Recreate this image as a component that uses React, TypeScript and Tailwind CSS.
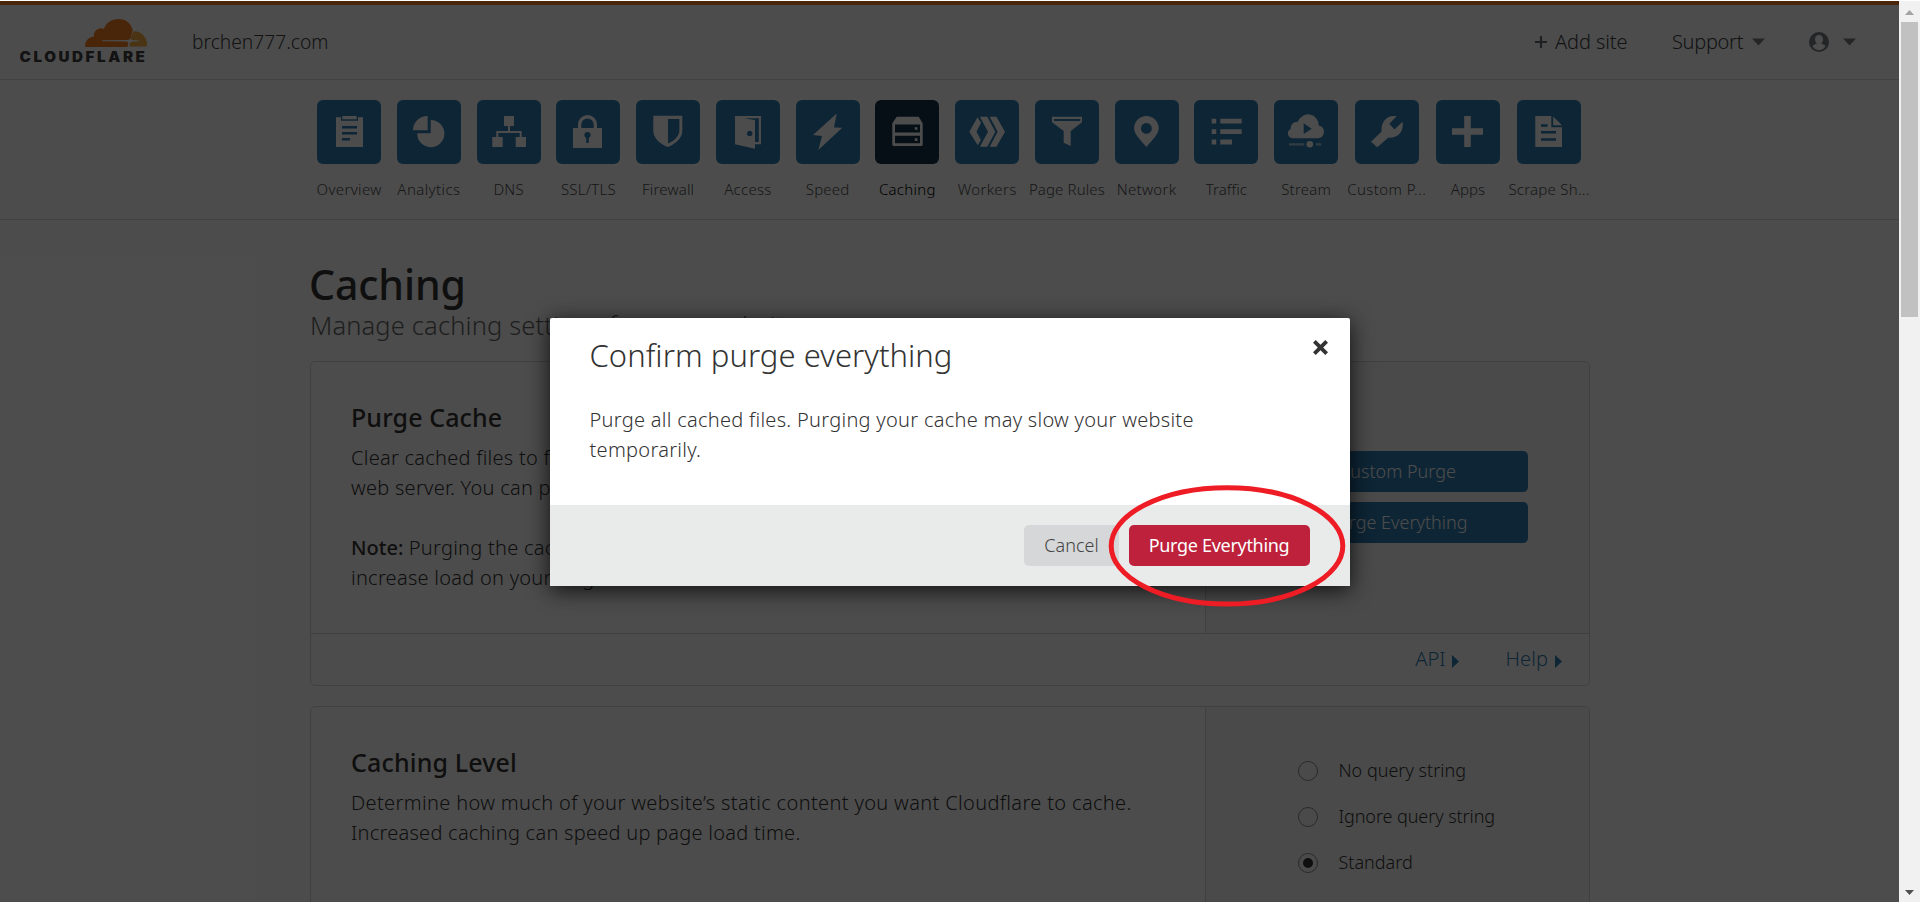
import React from "react";

const TILE = "fill-[#2d7cb1]";

type NavItem = { label: string; width: string; tracking: string; icon: React.ReactNode; active?: boolean };

const navItems: NavItem[] = [
  {
    label: "Overview", width: "w-[79.75px]", tracking: "tracking-[0.34px]",
    icon: (
      <>
        <path d="M19 17.3h5v3.4h17v-3.4h5V47H19z" />
        <path d="M25.3 16h14.4v3.3H25.3z" />
        <path className={TILE} d="M25 26h15v2.4H25zM25 32h15v2.5H25zM25 38h8v2.5h-8z" />
      </>
    ),
  },
  {
    label: "Analytics", width: "w-[79.75px]", tracking: "tracking-[0.4px]",
    icon: (
      <>
        <path d="M30.7 16v14.3H16A14.5 14.5 0 0 1 30.7 16z" />
        <path d="M33.7 20a13.6 13.6 0 1 1-13.5 13.3H33.7z" />
      </>
    ),
  },
  {
    label: "DNS", width: "w-[79.75px]", tracking: "tracking-[0.1px]",
    icon: <path d="M27 16h10v10h-4v5h11.7v6H49v10H38.7V37h4v-4H21.3v4h4.4v10H15.3V37h4v-6H31v-5h-4z" />,
  },
  {
    label: "SSL/TLS", width: "w-[79.75px]", tracking: "tracking-[0.25px]",
    icon: (
      <>
        <path d="M17 28h5v-3.5a9.5 9.5 0 0 1 19 0V28h5v20H17zM25.3 28h12.4v-3.3a6.2 6.2 0 0 0-12.4 0z" fillRule="evenodd" />
        <circle className={TILE} cx="31.5" cy="35" r="3.1" />
        <path className={TILE} d="M30.2 36h2.6v7h-2.6z" />
      </>
    ),
  },
  {
    label: "Firewall", width: "w-[79.75px]", tracking: "tracking-[0.2px]",
    icon: <path fillRule="evenodd" d="M17.3 15.8h29v14.7c0 7.5-6 13-14.5 16.6-8.5-3.600-14.500-9.100-14.500-16.600zM32 19v24.600c7-3.200 11.400-7.700 11.400-13.600V19z" />,
  },
  {
    label: "Access", width: "w-[79.75px]", tracking: "tracking-[0.25px]",
    icon: (
      <>
        <path d="M19 16h26v28.300h-6.500v-2.200h4.300V18.200H28L39 20v28.700l-20-4.400z" />
        <circle className={TILE} cx="33.700" cy="33.500" r="2.700" />
      </>
    ),
  },
  {
    label: "Speed", width: "w-[79.75px]", tracking: "tracking-[0.2px]",
    icon: <path d="M40.7 13.500 38 27.400l8.300.3L22.300 50 26 36.100 17 35z" />,
  },
  {
    label: "Caching", width: "w-[79.75px]", tracking: "tracking-[0.3px]", active: true,
    icon: (
      <>
        <path fillRule="evenodd" d="M21.700 16.700h22l4 6.500V44.500a1.500 1.500 0 0 1-1.500 1.500H18.800a1.500 1.500 0 0 1-1.500-1.500V23.200zM20 24.500v8h25v-8zM20 35.700v7.600h25v-7.600z" />
        <path d="M39.800 27.200h2.600v2.600h-2.600zM39.800 38.300h2.600v2.600h-2.600z" />
      </>
    ),
  },
  {
    label: "Workers", width: "w-[79.75px]", tracking: "tracking-[0.3px]",
    icon: (
      <path
        d="M22.500 17.200l-8.200 14.500 8.400 13.600 3.200-5.300-4.400-8.300 4.500-9zM24.900 16.700h7.400l8 15-8 15h-7.400L33 31.700zM34.700 16.700h6.700l8.600 15-8.600 15h-6.700l8-15z"
      />
    ),
  },
  {
    label: "Page Rules", width: "w-[79.75px]", tracking: "tracking-[0.12px]",
    icon: <path fillRule="evenodd" d="M17 16.700h30v5.500L35.700 31v15l-7-3.300V31L17 22.200zM19 19v2h26.300v-2z" />,
  },
  {
    label: "Network", width: "w-[79.75px]", tracking: "tracking-[0.3px]",
    icon: <path fillRule="evenodd" d="M31.400 16a12.300 12.300 0 0 1 12.300 12.300c0 6.700-7 12-12.300 18.700-5.300-6.700-12.300-12-12.300-18.700A12.300 12.300 0 0 1 31.400 16zm0 7a5.400 5.400 0 1 0 0 10.800 5.400 5.400 0 0 0 0-10.800z" />,
  },
  {
    label: "Traffic", width: "w-[79.75px]", tracking: "tracking-[0.1px]",
    icon: <path d="M17.700 18.800h4.500v4.800h-4.500zM26.300 18.800h21.400v4.800H26.300zM17.700 29.200h4.500V34h-4.500zM26.300 29.200h21.400V34H26.300zM17.700 39.600h4.500v4.800h-4.500zM26.300 39.600H38v4.800H26.300z" />,
  },
  {
    label: "Stream", width: "w-[79.75px]", tracking: "tracking-[0.2px]",
    icon: (
      <>
        <path d="M18.500 38.300a4.900 4.900 0 0 1-1.800-9.300c-.3-4.400 3-7.700 7.300-7.200a10.600 10.600 0 0 1 20.700 3.700 6.500 6.500 0 0 1-.3 12.800z" />
        <path className={TILE} d="M29.700 23.300v10.800l8-5.400z" />
        <path className="fill-white/60" d="M15 43.300h15.300v2.100H15zM42 43.300h5.300v2.100H42z" />
        <circle cx="35.800" cy="44.300" r="3.300" />
      </>
    ),
  },
  {
    label: "Custom P...", width: "w-[81.5px]", tracking: "tracking-[0.42px]",
    icon: <path d="M16 41.800 26.600 31.600c-1.300-8.600 5.200-17.200 15-15.300L34.400 23.700l5 5.800 8.200-7.700c1.600 8.600-4.300 17.300-14.200 15.800L22.300 47.300z" />,
  },
  {
    label: "Apps", width: "w-[81px]", tracking: "tracking-[0.1px]",
    icon: <path d="M28.200 16h6.600v12.300H47v6.500H34.800V47h-6.600V34.800H16v-6.500h12.200z" />,
  },
  {
    label: "Scrape Sh...", width: "w-[81px]", tracking: "tracking-[0.25px]",
    icon: (
      <>
        <path d="M18.300 16h16v11.200H45V47H18.300z" />
        <path d="M36.200 16.500 45 25.300h-8.800z" />
        <path className={TILE} d="M24 24.200h6.600v2.500H24zM24 31h15v2.600H24zM24 38.200h15v2.600H24z" />
      </>
    ),
  },
];

function Caret() {
  return (
    <svg width="13" height="8" viewBox="0 0 13 8" className="shrink-0 fill-[#777c80]">
      <path d="M0 .5h13L6.500 7.500z" />
    </svg>
  );
}

function Logo() {
  return (
    <svg width="127" height="45" viewBox="0 0 127 45" className="shrink-0">
      <path
        className="fill-[#f38020]"
        d="M65.300 28c-.8-4.600 2.300-10 8.600-10.500-.8-5.600 5-9.800 10-7.600C86 3.800 91.500 0 98.500 0c7.300 0 13 4.800 14.200 11.300l-2 7.400c-.5 1.500-1.700 2.200-3.300 2.300l-25.300.3v.9l24.500.3c1.500.1 2 .9 1.700 2.200l-.9 3.300z"
      />
      <path
        className="fill-[#faae40]"
        d="M113.400 12.200c7.800-.6 14.200 6.300 13.600 14.300-.1.500-.4.900-1 .9h-16.600c.2-3.700 1.200-4.400 4-4.800l6-.4v-.8l-6-.3c-2.300-.2-3-1.400-2.400-3.300z"
      />
      <text
        x="-0.500"
        y="43.300"
        textLength="128"
        lengthAdjust="spacingAndGlyphs"
        className="fill-[#404041] font-['Inter',sans-serif] text-[14px] font-black tracking-[2.4px]"
      >
        CLOUDFLARE
      </text>
    </svg>
  );
}

function Header() {
  return (
    <header className="flex h-[75px] shrink-0 items-center border-b border-[#dedede] pl-5 pr-[43px]">
      <div className="pb-px">
        <Logo />
      </div>
      <div className="ml-[45px] text-[19.2px] leading-[30px] text-[#404242]">brchen777.com</div>
      <div className="ml-auto flex items-center text-[20px] leading-[30px] text-[#404242]">
        <div className="flex items-center">
          <svg width="12" height="12" viewBox="0 0 12 12" className="mr-2 fill-[#6a6d6f]">
            <path d="M4.900 0h2.200v4.900H12v2.200H7.100V12H4.900V7.100H0V4.900h4.900z" />
          </svg>
          <span className="w-[72px] whitespace-nowrap tracking-[-0.1px]">Add site</span>
        </div>
        <div className="ml-[45px] flex items-center">
          <span className="mr-[9px] w-[71px] whitespace-nowrap tracking-[-0.3px]">Support</span>
          <Caret />
        </div>
        <div className="ml-[44px] flex items-center">
          <svg width="20" height="20" viewBox="0 0 20 20" className="mr-[14px] fill-[#777c80]">
            <path
              fillRule="evenodd"
              d="M10 0a10 10 0 1 1 0 20 10 10 0 0 1 0-20zM10 3c-2.600 0-4.100 1.900-4 4.500.1 1.800.9 3.300 2 4.200-2.200.4-3.700 1.200-4.600 2.400 1.300 2.600 3.600 4.100 6.600 4.100s5.300-1.500 6.600-4.100c-.9-1.200-2.400-2-4.600-2.400 1.100-.9 1.900-2.400 2-4.200.1-2.600-1.400-4.500-4-4.500z"
            />
          </svg>
          <Caret />
        </div>
      </div>
    </header>
  );
}

function Nav() {
  return (
    <nav className="h-[140px] shrink-0 border-b border-[#dedede] pt-5">
      <ul className="ml-[309.25px] flex">
        {navItems.map((n) => (
          <li key={n.label} className={`flex shrink-0 flex-col items-center ${n.width}`}>
            <div className={`h-16 w-16 rounded-[6px] ${n.active ? "bg-[#16344c]" : "bg-[#2d7cb1]"}`}>
              <svg width="64" height="64" viewBox="0 0 64 64" className="fill-white">
                {n.icon}
              </svg>
            </div>
            <span
              className={`mt-[15px] whitespace-nowrap text-[15px] leading-5 ${n.tracking} ${n.active ? "text-black" : "text-[#4d4f50]"}`}
            >
              {n.label}
            </span>
          </li>
        ))}
      </ul>
    </nav>
  );
}

function FooterLink({ label, className }: { label: string; className: string }) {
  return (
    <a className={`flex items-center pb-[2px] text-[20px] leading-[30px] text-[#2d7cb1] ${className}`}>
      {label}
      <svg width="7" height="13" viewBox="0 0 7 13" className="ml-[7px] mt-[5px] fill-[#2d7cb1]">
        <path d="M0 0l7 6.500L0 13z" />
      </svg>
    </a>
  );
}

function Radio({ label, checked, tracking }: { label: string; checked?: boolean; tracking: string }) {
  return (
    <label className="flex h-[46px] items-center">
      <span className="flex h-5 w-5 items-center justify-center rounded-full border border-[#8a8a8a]">
        {checked && <span className="h-[10px] w-[10px] rounded-full bg-[#333]" />}
      </span>
      <span className={`ml-[20.5px] whitespace-nowrap pb-[2px] text-[18px] leading-[26px] text-[#333] ${tracking}`}>{label}</span>
    </label>
  );
}

function Main() {
  return (
    <main className="ml-[310px] w-[1280px] pt-[44px] text-[#333]">
      <h1 className="-ml-px text-[41px] font-medium leading-10 tracking-[-0.1px]">Caching</h1>
      <p className="mt-[5px] text-[25.500px] leading-8 tracking-[0.15px] text-[#666]">
        Manage caching settings for your website.
      </p>

      <section className="mt-5 h-[325px] overflow-hidden rounded-[5px] border border-[#d5d5d5]">
        <div className="flex h-[272px] border-b border-[#d5d5d5]">
          <div className="w-[894px] pl-[40px] pt-[39px]">
            <h2 className="text-[25px] font-medium leading-8 tracking-[0.1px]">Purge Cache</h2>
            <div className="mt-[10px] whitespace-nowrap text-[20px] leading-[30px] tracking-[0.26px]">
              <p>
                Clear cached files to force Cloudflare to fetch a fresh version of those files from your
                <br />
                web server. You can purge files selectively or all at once.
              </p>
              <p className="mt-[30px]">
                <span className="font-medium tracking-normal">Note:</span> Purging the cache may temporarily degrade performance for your website and
                <br />
                increase load on your origin.
              </p>
            </div>
          </div>
          <div className="flex flex-1 flex-col items-center gap-[10px] border-l border-[#d5d5d5] bg-[#f8f8f8] pt-[89px] text-[18px] leading-[41px] text-white">
            <button className="h-[41px] w-[260px] rounded-[5px] bg-[#2d7cb1]">Custom Purge</button>
            <button className="h-[41px] w-[260px] rounded-[5px] bg-[#2d7cb1]">Purge Everything</button>
          </div>
        </div>
        <div className="flex h-[51px] items-center justify-end pr-[27px]">
          <FooterLink label="API" className="mr-[46px]" />
          <FooterLink label="Help" className="tracking-[0.1px]" />
        </div>
      </section>

      <section className="mt-5 flex h-[325px] overflow-hidden rounded-[5px] border border-[#d5d5d5]">
        <div className="w-[894px] pl-[40px] pt-[39px]">
          <h2 className="text-[25px] font-medium leading-8 tracking-[0.15px]">Caching Level</h2>
          <div className="mt-[10px] whitespace-nowrap text-[20px] leading-[30px]">
            <p className="tracking-[0.35px]">
              Determine how much of your website’s static content you want Cloudflare to cache.
            </p>
            <p className="tracking-[0.26px]">Increased caching can speed up page load time.</p>
          </div>
        </div>
        <div className="flex-1 border-l border-[#d5d5d5] bg-[#f8f8f8] pl-[92px] pt-[41px]">
          <Radio label="No query string" tracking="tracking-normal" />
          <Radio label="Ignore query string" tracking="tracking-[-0.080px]" />
          <Radio label="Standard" checked tracking="tracking-normal" />
        </div>
      </section>
    </main>
  );
}

function Modal() {
  return (
    <div className="relative flex h-[268px] w-[800px] flex-col rounded-[2px] bg-white text-[#333] shadow-[0_4px_22px_rgba(0,0,0,0.8)]">
      <div className="flex flex-1 justify-between pl-10 pr-[22px]">
        <div className="pt-[17px]">
          <h2 className="text-[31px] leading-10 tracking-[0.050px]">Confirm purge everything</h2>
          <p className="mt-[30px] whitespace-nowrap text-[20px] leading-[30px] tracking-[0.28px]">
            Purge all cached files. Purging your cache may slow your website
            <br />
            temporarily.
          </p>
        </div>
        <svg width="15" height="15" viewBox="0 0 15 15" className="mt-[22px] fill-[#333]">
          <path d="M2.700 0 7.500 4.800 12.300 0 15 2.700 10.200 7.500 15 12.300 12.300 15 7.500 10.200 2.700 15 0 12.300 4.800 7.500 0 2.700z" />
        </svg>
      </div>
      <div className="flex h-[81px] items-center justify-end gap-[10px] bg-[#e9ebea] pr-10 text-[18px]">
        <button className="h-[41px] w-[95px] rounded-[5px] bg-[#d5d7d8] pl-px text-[#444]">Cancel</button>
        <button className="h-[41px] w-[181px] whitespace-nowrap rounded-[5px] bg-[#bd213c] font-normal tracking-[-0.3px] text-white">
          Purge Everything
        </button>
      </div>
      <svg width="240" height="124" viewBox="0 0 240 124" className="absolute left-[557px] top-[166px] fill-none">
        <ellipse cx="120" cy="61.900" rx="115.800" ry="58.200" className="stroke-[#ee1c25] stroke-[5]" />
      </svg>
    </div>
  );
}

function Scrollbar() {
  return (
    <div className="flex h-[901px] w-[21px] shrink-0 flex-col items-center bg-[#f1f1f1]">
      <svg width="9" height="5" viewBox="0 0 9 5" className="mb-[7px] mt-[9px] fill-[#a3a3a3]">
        <path d="M4.500 0 9 5H0z" />
      </svg>
      <div className="h-[295px] w-[17px] bg-[#c1c1c1]" />
      <svg width="9" height="5" viewBox="0 0 9 5" className="mb-[7px] mt-auto fill-[#505050]">
        <path d="M4.500 5 9 0H0z" />
      </svg>
    </div>
  );
}

export default function App() {
  return (
    <div className="flex h-[902px] w-[1920px] overflow-hidden bg-white pt-px font-['Noto_Sans',sans-serif] font-light">
      <div className="relative flex h-[901px] w-[1899px] shrink-0 flex-col overflow-hidden">
        <div className="h-1 shrink-0 bg-[#f38020]" />
        <Header />
        <Nav />
        <Main />
        <div className="absolute inset-0 flex items-start justify-center bg-black/70 pt-[317px]">
          <Modal />
        </div>
      </div>
      <Scrollbar />
    </div>
  );
}
